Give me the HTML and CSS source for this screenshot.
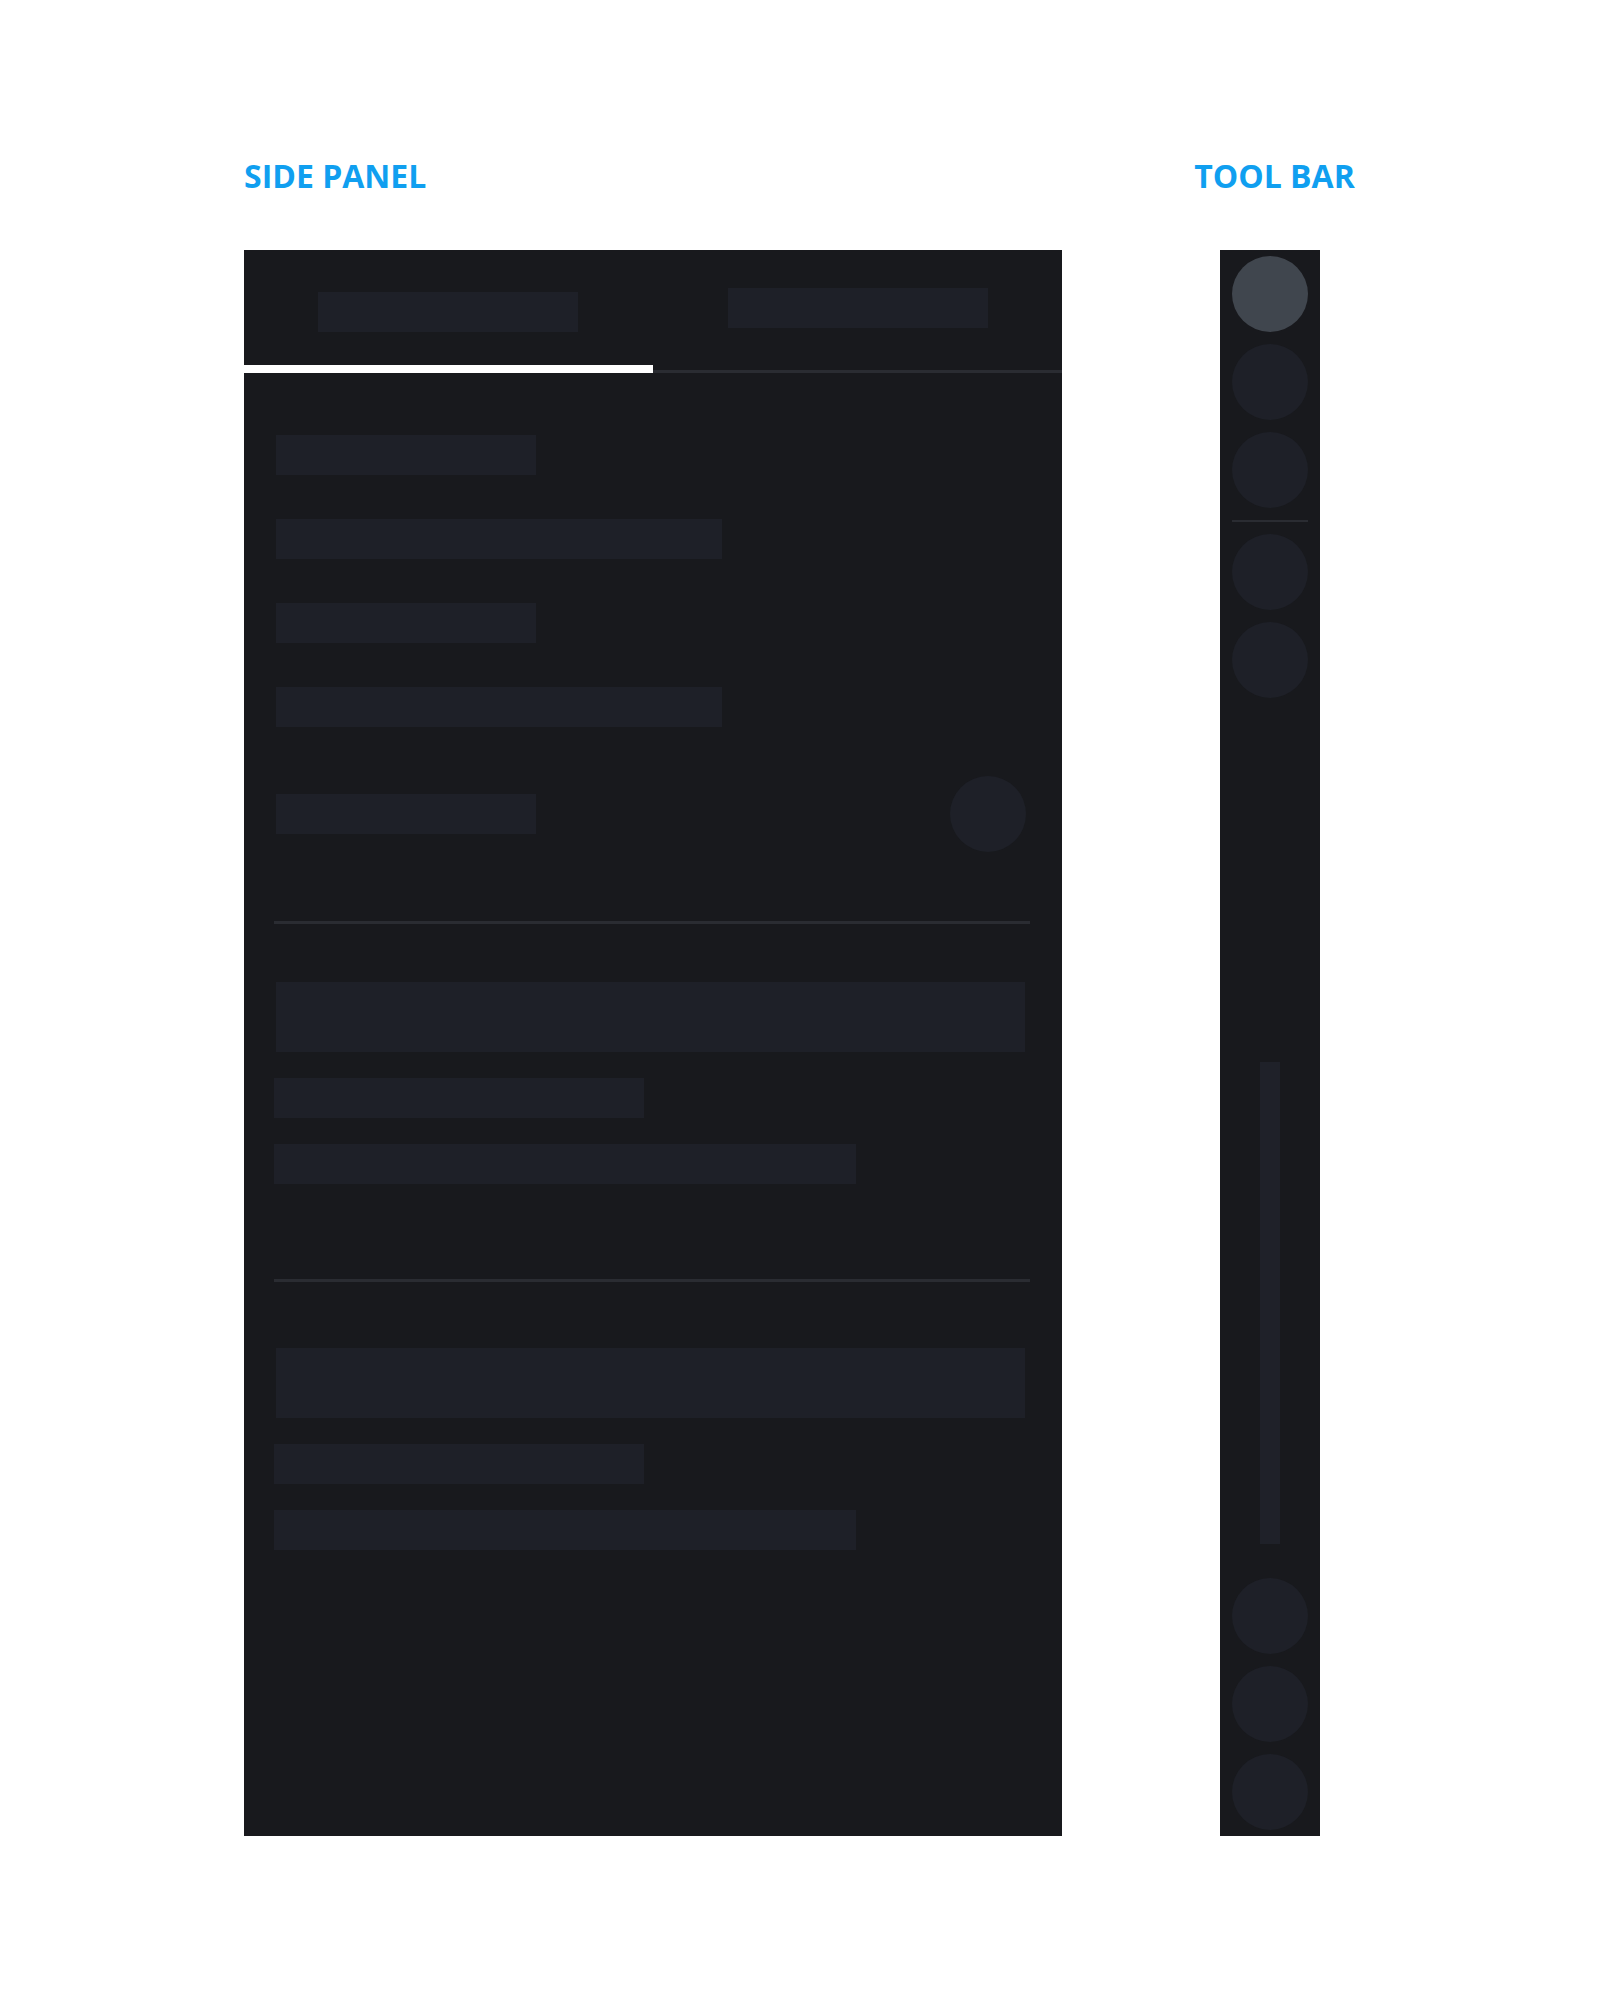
FILE: index.html
```html
<!DOCTYPE html>
<html lang="en">
<head>
<meta charset="utf-8">
<title>Side panel and tool bar</title>
<link rel="stylesheet" href="styles.css">
</head>
<body>
<main class="page">
  <section class="col col-panel">
    <h2 class="heading">SIDE PANEL</h2>
    <div class="panel">
      <div class="tabs">
        <div class="tab tab-active"><span class="ph ph-tab"></span></div>
        <div class="tab tab-idle"><span class="ph ph-tab"></span></div>
      </div>
      <div class="list">
        <span class="ph ph-short"></span>
        <span class="ph ph-long"></span>
        <span class="ph ph-short"></span>
        <span class="ph ph-long"></span>
        <div class="list-row">
          <span class="ph ph-short"></span>
          <span class="knob"></span>
        </div>
      </div>
      <div class="group group-first">
        <hr class="rule">
        <span class="ph ph-block"></span>
        <span class="ph ph-mid"></span>
        <span class="ph ph-wide"></span>
      </div>
      <div class="group group-second">
        <hr class="rule">
        <span class="ph ph-block"></span>
        <span class="ph ph-mid"></span>
        <span class="ph ph-wide"></span>
      </div>
    </div>
  </section>
  <section class="col col-tools">
    <h2 class="heading heading-tools">TOOL BAR</h2>
    <div class="toolbar">
      <div class="tool-group">
        <span class="tool tool-on"></span>
        <span class="tool"></span>
        <span class="tool"></span>
        <span class="tool-sep"></span>
        <span class="tool"></span>
        <span class="tool"></span>
      </div>
      <span class="track"></span>
      <div class="tool-group">
        <span class="tool"></span>
        <span class="tool"></span>
        <span class="tool"></span>
      </div>
    </div>
  </section>
</main>
</body>
</html>
```

FILE: styles.css
```css
html, body {
  margin: 0;
  background: #ffffff;
}

.page {
  display: flex;
  align-items: flex-start;
  gap: 128px;
  padding: 156px 0 0 244px;
  font-family: "Open Sans", "Liberation Sans", sans-serif;
}

.col {
  display: flex;
  flex-direction: column;
}

.col-panel {
  width: 818px;
}

.col-tools {
  width: 160px;
  align-items: center;
}

.heading {
  margin: 0 0 54px;
  height: 40px;
  font-size: 32px;
  line-height: 40px;
  font-weight: 700;
  color: #109ff0;
  white-space: nowrap;
}

.heading-tools {
  margin-left: 9px;
}

/* placeholder blocks */
.ph {
  display: block;
  height: 40px;
  background: #1e2028;
  flex: none;
}

/* ---------- side panel ---------- */
.panel {
  height: 1586px;
  background: #18191d;
  display: flex;
  flex-direction: column;
}

.tabs {
  display: flex;
  height: 123px;
}

.tab {
  flex: 1;
  display: flex;
  flex-direction: column;
}

.tab-active {
  padding: 42px 0 0 74px;
  border-bottom: 8px solid #ffffff;
}

.tab-idle {
  padding: 38px 0 0 75px;
  border-bottom: 3px solid #2a2c32;
}

.ph-tab {
  width: 260px;
}

.list {
  display: flex;
  flex-direction: column;
  gap: 44px;
  padding: 62px 0 0 32px;
}

.ph-short { width: 260px; }
.ph-long  { width: 446px; }

.list-row {
  width: 750px;
  height: 76px;
  margin-top: 5px;
  display: flex;
  align-items: center;
  justify-content: space-between;
}

.knob {
  width: 76px;
  height: 76px;
  border-radius: 50%;
  background: #1e2028;
}

.group {
  display: flex;
  flex-direction: column;
  padding-left: 30px;
}

.group-first { margin-top: 69px; }
.group-second { margin-top: 95px; }

.rule {
  width: 756px;
  height: 3px;
  margin: 0;
  border: 0;
  background: #2a2c32;
}

.group-first .ph-block { margin-top: 58px; }
.group-second .ph-block { margin-top: 66px; }

.ph-block {
  width: 749px;
  height: 70px;
  margin-left: 2px;
}

.ph-mid {
  width: 370px;
  margin-top: 26px;
}

.ph-wide {
  width: 582px;
  margin-top: 26px;
}

/* ---------- tool bar ---------- */
.toolbar {
  width: 100px;
  height: 1586px;
  box-sizing: border-box;
  padding: 6px 0;
  background: #18191d;
  display: flex;
  flex-direction: column;
  align-items: center;
}

.tool-group {
  display: flex;
  flex-direction: column;
  align-items: center;
  gap: 12px;
}

.tool {
  width: 76px;
  height: 76px;
  border-radius: 50%;
  background: #1e2028;
}

.tool-on {
  background: #40464e;
}

.tool-sep {
  width: 76px;
  height: 2px;
  background: #2a2c32;
}

.track {
  width: 20px;
  height: 482px;
  margin-top: auto;
  margin-bottom: 34px;
  background: #1f2129;
}
```
